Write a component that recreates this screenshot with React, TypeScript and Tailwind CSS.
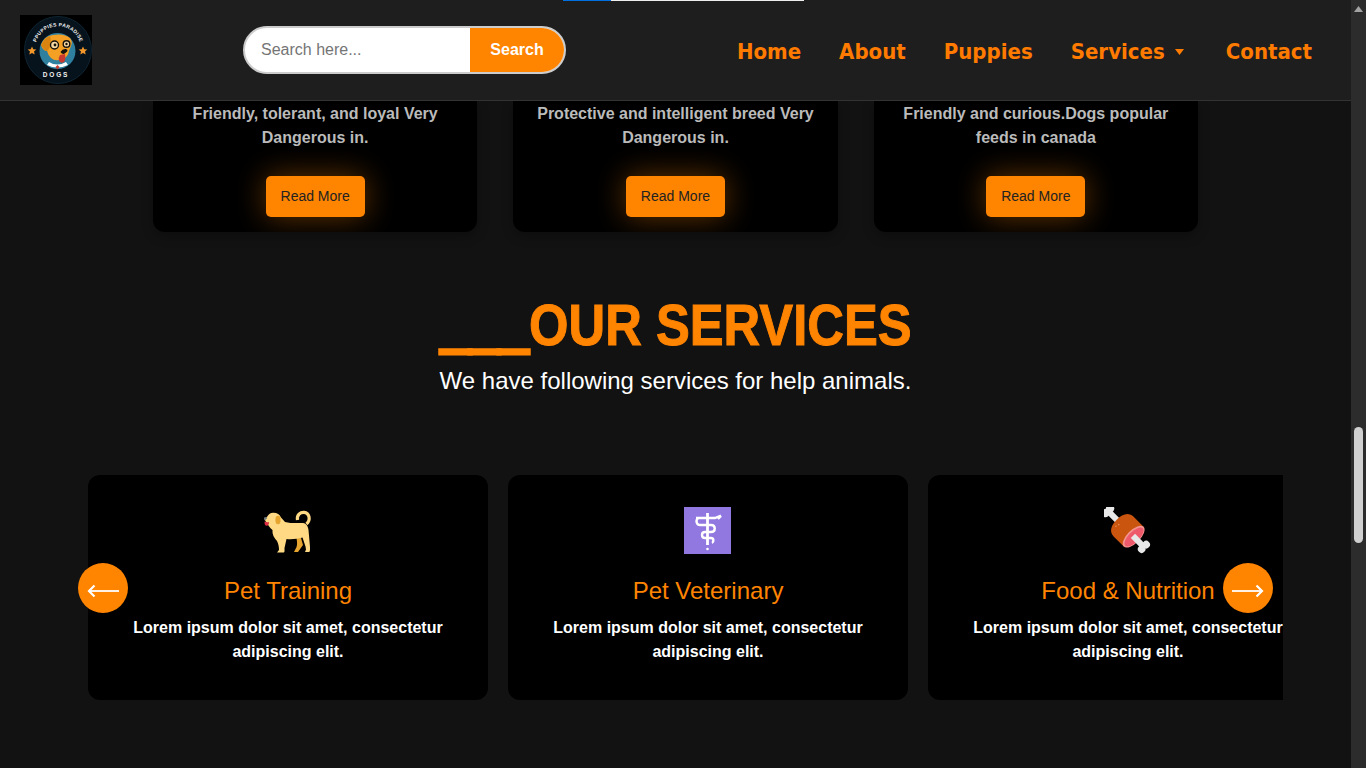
const topCards = [
  { text: ['Friendly, tolerant, and loyal Very', 'Dangerous in.'] },
  { text: ['Protective and intelligent breed Very', 'Dangerous in.'] },
  { text: ['Friendly and curious.Dogs popular', 'feeds in canada'] },
]

const services = [
  { title: 'Pet Training', icon: <DogIcon /> },
  { title: 'Pet Veterinary', icon: <MedicalIcon /> },
  { title: 'Food & Nutrition', icon: <MeatIcon /> },
]

export default function App() {
  return (
    <div className="flex h-[768px] w-[1366px] overflow-hidden bg-[#121212] font-['Liberation_Sans',Arial,sans-serif]">
      <div className="w-[1351px] shrink-0">
        <Header />

        {/* Breed cards, scrolled up under the header */}
        <section className="flex justify-center gap-[36px]">
          {topCards.map((card) => (
            <div
              key={card.text[0]}
              className="flex h-[131px] w-[324.33px] flex-col items-center overflow-hidden rounded-b-xl bg-black pt-[1px] shadow-[0_4px_12px_rgba(0,0,0,0.3)]"
            >
              <p className="text-center text-base leading-[24px] font-bold text-[#bbbbbb]">
                {card.text[0]}
                <br />
                {card.text[1]}
              </p>
              <button className="mt-[26px] h-[41px] w-[99px] shrink-0 rounded-[5px] bg-[#ff8400] pb-[1px] text-sm text-[#222222] shadow-[0_0_30px_rgba(255,132,0,0.4)]">
                Read More
              </button>
            </div>
          ))}
        </section>

        {/* Services */}
        <section className="mt-[58px] text-center">
          <h2 className="flex h-[70px] items-baseline pl-[440.5px] text-[58px] leading-[70px] font-bold whitespace-nowrap text-[#ff8400]">
            <span className="relative top-[1px] inline-block w-[88px] origin-left scale-x-[0.9] [-webkit-text-stroke:5px_#ff8400]">___</span>
            <span className="inline-block w-[382px] origin-left scale-x-[0.875] [-webkit-text-stroke:1px_#ff8400]">OUR SERVICES</span>
          </h2>
          <p className="mt-[7px] text-2xl leading-[28px] text-white">We have following services for help animals.</p>
        </section>

        <section className="relative mt-[80px] ml-[78px] w-[1195px]">
          <div className="ml-[10px] flex w-[1195px] gap-[20px] overflow-hidden">
            {services.map((s) => (
              <div key={s.title} className="flex h-[225px] w-[400px] shrink-0 flex-col items-center rounded-xl bg-black pt-[25px]">
                <div className="flex h-[60px] items-center justify-center">{s.icon}</div>
                <h3 className="mt-[17px] text-2xl leading-[28px] text-[#ff8400]">{s.title}</h3>
                <p className="mt-[11px] text-center text-base leading-[24px] font-bold whitespace-nowrap text-white">
                  Lorem ipsum dolor sit amet, consectetur
                  <br />
                  adipiscing elit.
                </p>
              </div>
            ))}
          </div>
          <ArrowButton dir="left" />
          <ArrowButton dir="right" />
        </section>
      </div>

      {/* Window scrollbar */}
      <div className="relative h-full w-[15px] shrink-0 bg-[#2c2c2c]">
        <svg className="absolute top-[6px] left-[3px]" width="9" height="6" viewBox="0 0 9 6">
          <path d="M4.5 0 9 6H0z" fill="#a3a3a3" />
        </svg>
        <div className="absolute top-[427px] left-[3px] h-[116px] w-[9px] rounded-full bg-[#d0d0d0]" />
      </div>
    </div>
  )
}

function Header() {
  const links = ['Home', 'About', 'Puppies', 'Services', 'Contact']
  return (
    <header className="relative flex h-[101px] items-center border-b border-[#333333] bg-[#1e1e1e]">
      <div className="absolute top-0 left-[563px] flex h-[1px]">
        <div className="w-[48px] bg-[#0070e0]" />
        <div className="w-[193px] bg-[#eeeeee]" />
      </div>
      <div className="ml-[20px]">
        <Logo />
      </div>
      <form className="ml-[151px] flex h-[48px] w-[323px] overflow-hidden rounded-full border-2 border-[#cccccc] bg-white">
        <input placeholder="Search here..." className="w-[225px] pl-[16px] text-base text-black outline-none placeholder:text-[#757575]" />
        <button type="button" className="flex-1 bg-[#ff8400] text-base font-bold text-white">
          Search
        </button>
      </form>
      <nav className="mt-[3px] mr-[39px] ml-auto flex items-center gap-[38px] font-['DejaVu_Sans',sans-serif] text-[22px] leading-[28px] font-bold text-[#ff7b00] [font-stretch:condensed]">
        {links.map((link) => (
          <a key={link} className="flex items-center">
            {link}
            {link === 'Services' && (
              <svg className="mt-[1px] mr-[4px] ml-[10px]" width="9" height="6" viewBox="0 0 9 6">
                <path d="M0 0h9L4.500 6z" fill="#ff7b00" />
              </svg>
            )}
          </a>
        ))}
      </nav>
    </header>
  )
}

function ArrowButton({ dir }: { dir: 'left' | 'right' }) {
  return (
    <button
      className={`absolute top-[88px] flex h-[50px] w-[50px] items-center justify-center rounded-full bg-[#ff8400] pt-[5px] ${
        dir === 'left' ? 'left-0' : 'left-[1145px]'
      }`}
    >
      <svg width="32" height="14" viewBox="0 0 32 14" fill="none" stroke="#fff">
        {dir === 'left' ? (
          <>
            <path d="M2 7h30" strokeWidth="1.800" />
            <path d="M7.500 1.500 2 7l5.500 5.500" strokeWidth="2.200" />
          </>
        ) : (
          <>
            <path d="M0 7h30" strokeWidth="1.800" />
            <path d="M24.500 1.500 30 7l-5.500 5.500" strokeWidth="2.200" />
          </>
        )}
      </svg>
    </button>
  )
}

function Logo() {
  return (
    <svg width="72" height="70" viewBox="0 0 72 70">
      <rect width="72" height="70" fill="#000" />
      <circle cx="38" cy="35" r="33.500" fill="#06131c" stroke="#0e2431" />
      <circle cx="37.500" cy="36" r="18" fill="#2f7f9f" />
      <defs>
        <path id="logo-top" d="M15.300 38A23 23 0 1 1 60.700 38" />
      </defs>
      <text fontSize="5" fontWeight="700" fill="#f1f1f1" letterSpacing="0.350" fontFamily="'Liberation Sans', sans-serif">
        <textPath href="#logo-top" startOffset="50%" textAnchor="middle">
          PPUPPIES PARADISE
        </textPath>
      </text>
      <text x="36" y="62" fontSize="6.500" fontWeight="700" fill="#f1f1f1" textAnchor="middle" letterSpacing="1.800" fontFamily="'Liberation Sans', sans-serif">
        DOGS
      </text>
      <path d="M12 31.500l1.300 2.800 3 .3-2.300 2 .7 3-2.700-1.600-2.700 1.600.7-3-2.300-2 3-.3z" fill="#f0962a" />
      <path d="M63 31.500l1.300 2.800 3 .3-2.300 2 .7 3-2.700-1.600-2.700 1.600.7-3-2.300-2 3-.3z" fill="#f0962a" />
      {/* collar and tie */}
      <path d="M29 47q8 5 17 0l2 3q-11 5-21 0z" fill="#fff" />
      <path d="M37.500 50l2 2-2 2.500-2-2.500z" fill="#c8392f" />
      {/* head */}
      <path d="M21 30q3-9 12-10 11-2 17 3 3 4 1 8l-2 5q-1 6-6 8-8 3-12-1-3-3-4-7-4 0-6-6z" fill="#f3a024" />
      <path d="M21 30q4-8 9-9 2 6-1 13-1 2-3 2-3-2-5-6z" fill="#d98410" />
      <path d="M40 40q-2 3-1 6 2 3 5 1 2-3 1-8z" fill="#c8392f" />
      <circle cx="34.500" cy="30" r="4" fill="#f6d9a2" stroke="#15120e" strokeWidth="1.400" />
      <circle cx="46.500" cy="29" r="3.300" fill="#f6d9a2" stroke="#15120e" strokeWidth="1.400" />
      <circle cx="35" cy="30" r="1.400" fill="#15120e" />
      <circle cx="46.500" cy="29" r="1.200" fill="#15120e" />
      <path d="M40.500 37q2-3.500 5.500-3 3 1.500 0 3.500-3 3-5.500-.5z" fill="#15120e" />
    </svg>
  )
}

function DogIcon() {
  return (
    <svg className="mt-[2px]" width="48" height="43" viewBox="0 0 48 43">
      {/* far hind leg */}
      <path d="M32 26l5 2 2 7-5 7h-4l1-2c2-3 3-6 1-14z" fill="#e5a52e" />
      {/* tail */}
      <path d="M33.500 10C32.500 5 36.500 2 40 2.300 45.500 3 47 10 42.500 14" fill="none" stroke="#ffd983" strokeWidth="3.200" />
      {/* body and head */}
      <path d="M0 8.500 3 7C4 4.500 6.500 2.500 9.500 2.700 13 2.700 16 4.500 17 7.500L21 12c6 1.500 12 1 18 1 3 0 5 3 5.500 7L46 37v3c0 2-1 2-2 2h-3l1-2.500-.5-3-3-9c-5 1.500-11 2-16 1.500l-2 9v3c0 1-.5 1.500-1.500 1.500H13l2-2.500c0-3-.5-6-2-9-3-3-5-7-4.500-11C6 18 3 14 0 8.500z" fill="#ffd983" />
      <path d="M0 7.500 2.500 7l.5 1.500-2.500 2z" fill="#66757f" />
      <path d="M.6 11.500c1.500.8 3 .8 4.400.5 0 2-.7 3.800-2.300 3.800S.2 13.500.6 11.500z" fill="#dd2e44" />
      <ellipse cx="14" cy="10" rx="2.600" ry="4.200" fill="#e5a52e" />
    </svg>
  )
}

function MedicalIcon() {
  return (
    <svg className="-ml-[1px]" width="47" height="47" viewBox="0 0 47 47">
      <rect width="47" height="47" fill="#9177e0" />
      <g fill="none" stroke="#fff" strokeWidth="2.400">
        <path d="M23.500 6v32" strokeWidth="2.800" />
        <path d="M12 11h19l6-2.500" />
        <path d="M37 9l-3 3" />
        <path d="M14 11c-3 3-1 7 2 7h11c5 0 5 7 0 7h-6c-4 0-4 6 0 6h6c3 0 3 4 1 5" />
      </g>
      <circle cx="23.500" cy="42" r="1.300" fill="#fff" />
    </svg>
  )
}

function MeatIcon() {
  return (
    <svg className="mt-[1px]" width="48" height="48" viewBox="0 0 48 48">
      <g transform="rotate(-45 24 24)">
        <rect x="21" y="-4" width="6" height="14" fill="#e8e8e8" />
        <circle cx="20.800" cy="-4.500" r="4" fill="#e8e8e8" />
        <circle cx="27.200" cy="-4.500" r="4" fill="#e8e8e8" />
        <path d="M10 18c0-7 6-10 14-10s14 3 14 10v14H10z" fill="#c9550f" />
        <ellipse cx="24" cy="32" rx="14" ry="6.500" fill="#f4938f" />
        <ellipse cx="24" cy="32.500" rx="12.300" ry="5.300" fill="#ee5a6c" />
        <rect x="21" y="31" width="6" height="15" fill="#e8e8e8" />
        <circle cx="20.800" cy="46.500" r="3.800" fill="#e8e8e8" />
        <circle cx="27.200" cy="46.500" r="3.800" fill="#e8e8e8" />
        <circle cx="19" cy="12" r=".6" fill="#f4b183" />
        <circle cx="22" cy="13" r=".6" fill="#f4b183" />
      </g>
    </svg>
  )
}
